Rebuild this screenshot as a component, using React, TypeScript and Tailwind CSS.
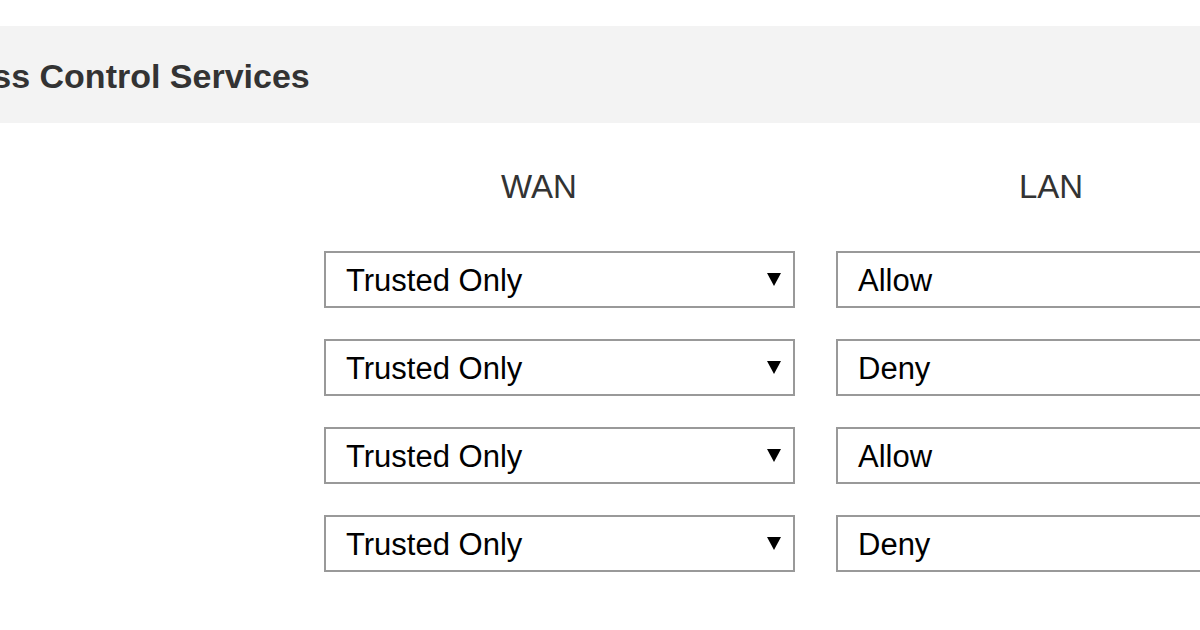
import React from "react";

const rows = [
  { wan: "Trusted Only", lan: "Allow" },
  { wan: "Trusted Only", lan: "Deny" },
  { wan: "Trusted Only", lan: "Allow" },
  { wan: "Trusted Only", lan: "Deny" },
];

const Arrow = () => (
  <svg width="14" height="13" viewBox="0 0 14 13" className="shrink-0">
    <polygon points="0,0 14,0 7,13" fill="#000" />
  </svg>
);

const SelectBox = ({ value, arrow }: { value: string; arrow?: boolean }) => (
  <div className="flex h-[57px] w-[471px] items-center justify-between border-2 border-[#999] bg-white pl-[20px] pr-[12px]">
    <span className="pt-[3px] text-[31px] leading-[36px] text-black">{value}</span>
    {arrow && <Arrow />}
  </div>
);

export default function App() {
  return (
    <div className="relative h-[630px] w-[1200px] overflow-hidden bg-white font-['Liberation_Sans',Arial,sans-serif]">
      <div className="mt-[26px] flex h-[97px] items-center overflow-hidden bg-[#f3f3f3]">
        <h1 className="ml-[-89px] whitespace-nowrap pt-[2px] text-[34px] font-bold leading-[38px] text-[#333]">
          Access Control Services
        </h1>
      </div>

      <div className="grid grid-cols-[283px_471px_471px] gap-x-[41px] pt-[48px]">
        <div />
        <div className="pr-[41px] text-center text-[33px] leading-[32px] text-[#333]">WAN</div>
        <div className="pr-[41px] text-center text-[33px] leading-[32px] text-[#333]">LAN</div>
      </div>

      <div className="mt-[48px] flex flex-col gap-[31px]">
        {rows.map((row, i) => (
          <div key={i} className="grid grid-cols-[283px_471px_471px] gap-x-[41px]">
            <div />
            <SelectBox value={row.wan} arrow />
            <SelectBox value={row.lan} />
          </div>
        ))}
      </div>
    </div>
  );
}
